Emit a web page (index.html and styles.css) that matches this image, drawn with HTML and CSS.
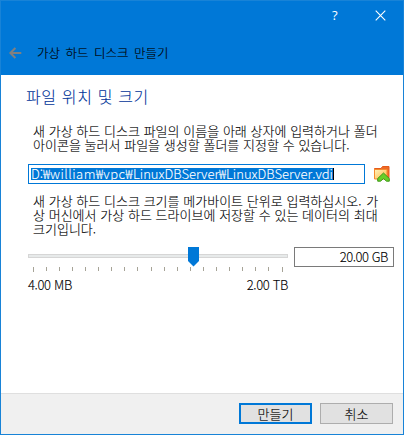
FILE: index.html
```
<!DOCTYPE html>
<html lang="ko">
<head>
<meta charset="utf-8">
<title>가상 하드 디스크 만들기</title>
<link rel="stylesheet" href="styles.css">
</head>
<body>
<div class="window">
  <header class="titlebar">
    <div class="controls">
      <span class="help">?</span>
      <svg class="close" width="11" height="11" viewBox="0 0 11 11"><path d="M.7.7l9.6 9.6M10.3.7L.7 10.3"/></svg>
    </div>
    <div class="caption">
      <svg class="back" width="13" height="12" viewBox="0 0 13 12"><path d="M12.3 6H1.5M6.4 1L1.4 6l5 5"/></svg>
      <span class="title">가상 하드 디스크 만들기</span>
    </div>
  </header>
  <main class="page">
    <h1 class="heading">파일 위치 및 크기</h1>
    <p class="copy copy-location">새 가상 하드 디스크 파일의 이름을 아래 상자에 입력하거나 폴더<br>아이콘을 눌러서 파일을 생성할 폴더를 지정할 수 있습니다.</p>
    <div class="file-row">
      <div class="path"><span class="selection"><span class="path-text">D:₩<span class="dir">william₩vpc₩</span>LinuxDBServer₩LinuxDBServer.vdi</span></span></div>
      <svg class="folder" width="18" height="18" viewBox="0 0 18 18">
        <defs>
          <linearGradient id="paper" x1="0" y1="0" x2="1" y2="1"><stop offset="0" stop-color="#fff3bd"/><stop offset="1" stop-color="#ffb73d"/></linearGradient>
        </defs>
        <path d="M1.5 13.5v-10h6.5l1.5-2h6.5v12z" fill="#ee6a26" stroke="#e55b1c"/>
        <path d="M1.5 4.5h12.5v9.5H1.5z" fill="url(#paper)" stroke="#f58b2c"/>
        <path d="M10.5 8L16.3 13.5v2.7h-2.8l-3-2.6-3 2.6H4.7v-2.7z" fill="#66cf28" stroke="#3f981a"/>
      </svg>
    </div>
    <p class="copy copy-size">새 가상 하드 디스크 크기를 메가바이트 단위로 입력하십시오<span class="stop">.</span> 가<br>상 머신에서 가상 하드 드라이브에 저장할 수 있는 데이터의 최대<br>크기입니다.</p>
    <div class="size-row">
      <div class="slider">
        <svg class="scale" width="260" height="25" viewBox="0 0 260 25" shape-rendering="crispEdges">
          <path d="M.5 7.5h259v3H.5z" fill="#e7eaea" stroke="#d6d6d6"/>
          <path class="ticks" d="M5.5 20v5M18.5 20v4M31.5 20v4M44.5 20v4M57.5 20v4M70.5 20v4M83.5 20v4M96.5 20v4M109.5 20v4M123.5 20v4M136.5 20v4M149.5 20v4M162.5 20v4M175.5 20v4M188.5 20v4M201.5 20v4M214.5 20v4M227.5 20v4M240.5 20v4M254.5 20v5"/>
          <path d="M160 0h11v14l-5.5 5.5L160 14z" fill="#0078d7" shape-rendering="auto"/>
        </svg>
        <div class="range"><span>4.00 MB</span><span>2.00 TB</span></div>
      </div>
      <div class="size">20.00 GB</div>
    </div>
  </main>
  <footer class="footer">
    <button class="button primary">만들기</button>
    <button class="button">취소</button>
  </footer>
</div>
</body>
</html>
```
FILE: styles.css
```
* { box-sizing: border-box; }
body { margin: 0; }
.window {
  width: 404px;
  height: 435px;
  display: flex;
  flex-direction: column;
  border: 1px solid #1883d7;
  background: #fff;
  color: #000;
  font-family: "Noto Sans CJK KR", sans-serif;
  font-size: 13px;
  font-weight: 300;
  white-space: nowrap;
}
.titlebar { height: 74px; flex: none; background: #0078d7; }
.controls {
  height: 28px;
  display: flex;
  justify-content: flex-end;
  align-items: center;
  padding-right: 17px;
}
.help {
  width: 7px;
  margin-right: 36px;
  color: #fff;
  font: 13px/28px "Open Sans", sans-serif;
}
.close { fill: none; stroke: #fff; stroke-width: 1.1; }
.caption {
  height: 20px;
  display: flex;
  align-items: center;
  margin-top: 14px;
  padding-left: 8px;
}
.back { fill: none; stroke: #808080; stroke-width: 2; }
.title {
  margin-left: 15px;
  font-size: 12.5px;
  line-height: 20px;
  word-spacing: 2px;
  -webkit-text-stroke: .15px #000;
}
.page { flex: 1; padding: 9px 9px 0 27px; }
.heading {
  height: 24px;
  margin: 0 0 0 -2px;
  color: #003399;
  font-size: 16px;
  font-weight: 300;
  line-height: 24px;
  letter-spacing: .65px;
  -webkit-text-stroke: .1px #003399;
}
.copy { margin: 0 0 0 5px; line-height: 14px; word-spacing: .1px; }
.copy, .range, .size, .button { -webkit-text-stroke: .1px #000; }
.stop { letter-spacing: 1px; }
.copy-location { height: 28px; margin-top: 16px; }
.file-row { display: flex; align-items: center; margin-top: 12px; height: 20px; }
.path {
  width: 337px;
  height: 20px;
  flex: none;
  border: 1px solid #0078d7;
  padding: 3px 0 0 2px;
}
.selection {
  display: block;
  width: 303px;
  height: 12px;
  border-right: 1px solid #000;
  background: #0078d7;
  color: #fff;
  line-height: 12px;
}
.path-text { display: block; -webkit-text-stroke: .1px #fff; }
.dir { letter-spacing: .5px; }
.folder { margin-left: 8px; }
.copy-size { height: 42px; margin-top: 10px; }
.size-row { display: flex; margin-top: 11px; }
.slider { width: 260px; }
.scale { display: block; }
.ticks { stroke: #a6a397; }
.range {
  display: flex;
  justify-content: space-between;
  margin-top: 6px;
  line-height: 14px;
  letter-spacing: -.35px;
}
.size {
  width: 100px;
  height: 20px;
  margin-left: 6px;
  padding-right: 5px;
  border: 1px solid #7a7a7a;
  text-align: right;
  line-height: 17px;
  letter-spacing: -.45px;
}
.footer {
  height: 41px;
  flex: none;
  display: flex;
  justify-content: flex-end;
  gap: 8px;
  padding: 9px 10px 0 0;
  border-top: 1px solid #dfdfdf;
  background: #f0f0f0;
}
.button {
  width: 73px;
  height: 21px;
  padding: 0;
  border: 1px solid #adadad;
  background: #e1e1e1;
  color: #000;
  font: 300 13px/18px "Noto Sans CJK KR", sans-serif;
}
.primary { border: 2px solid #0078d7; line-height: 16px; }
```
